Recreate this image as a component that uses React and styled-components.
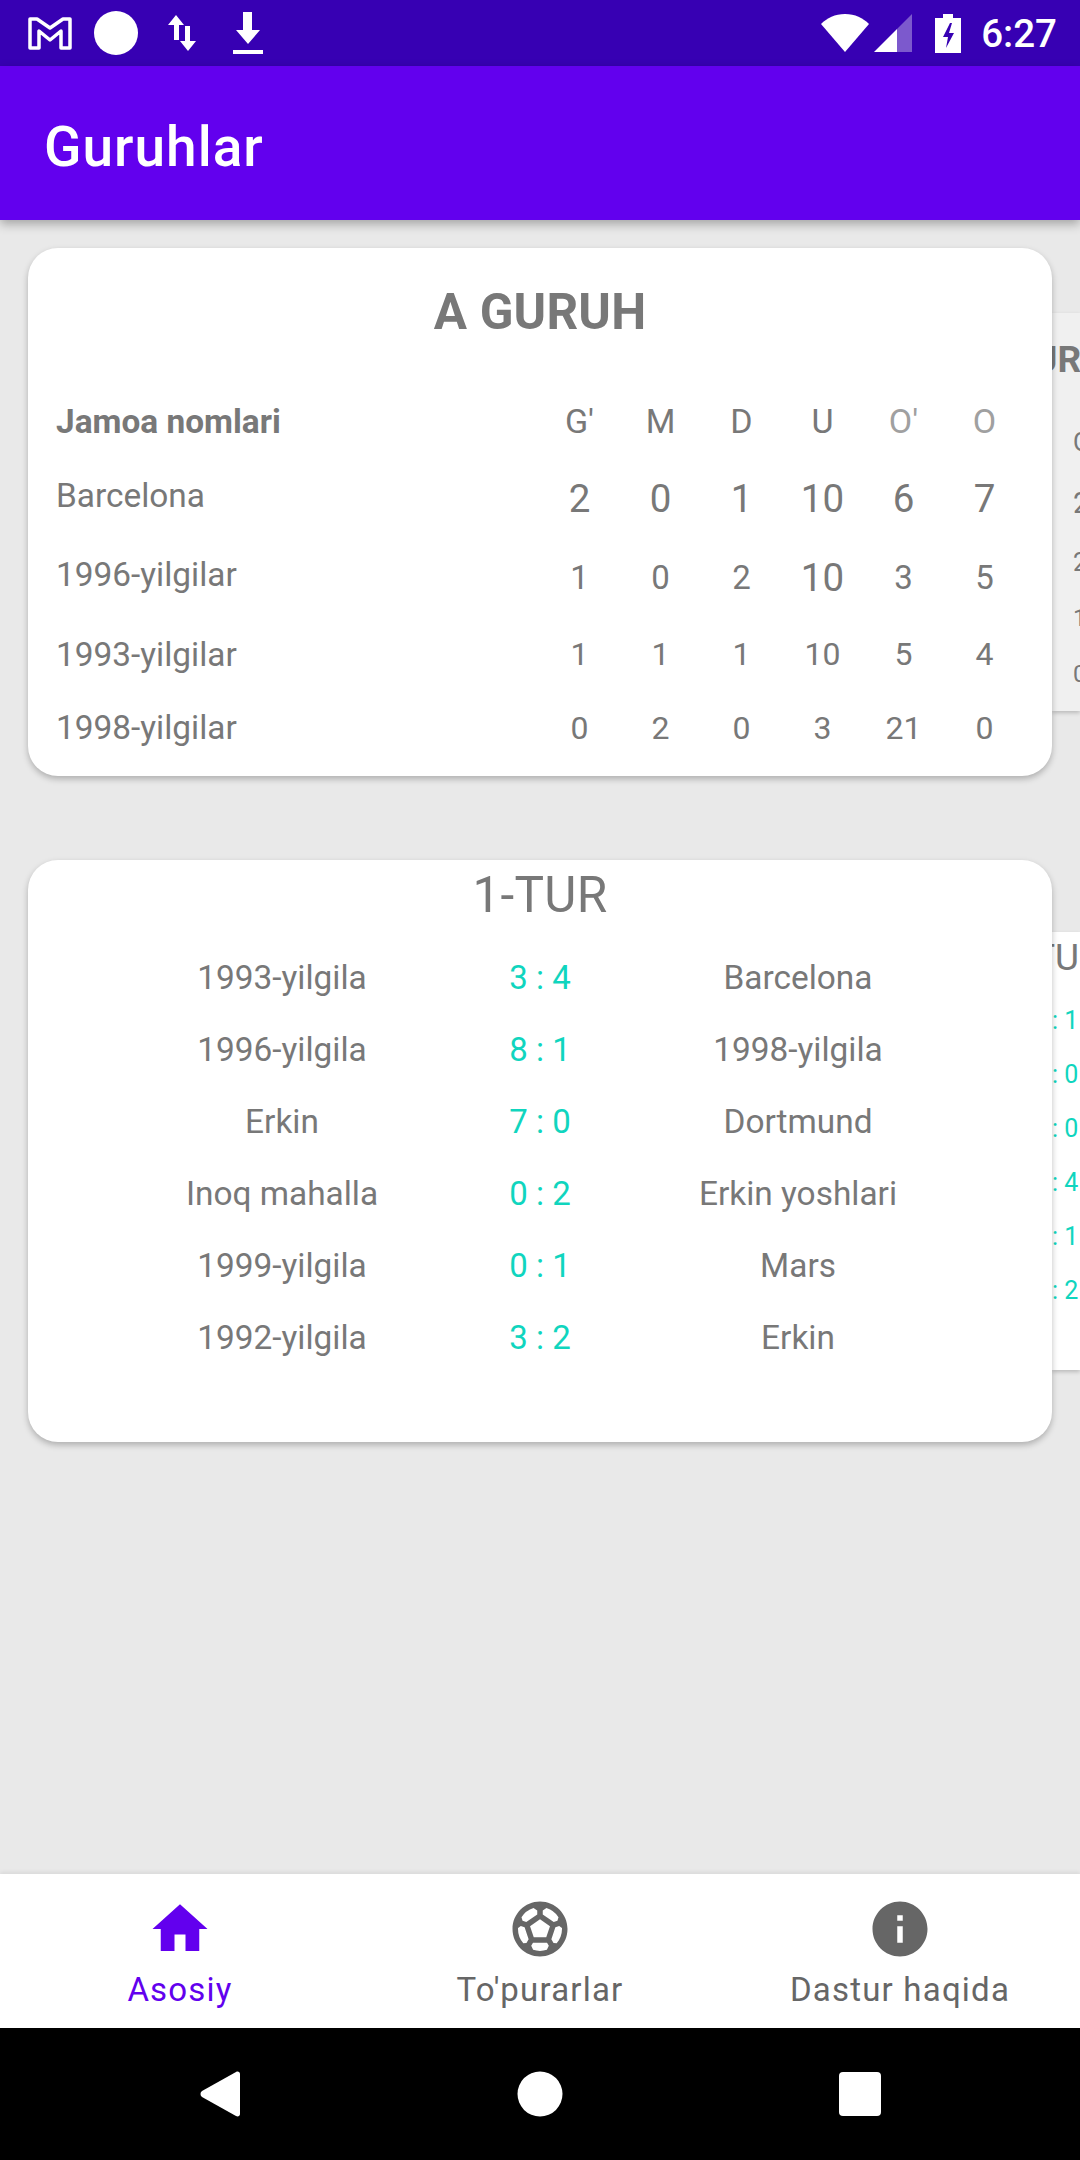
import styled, { createGlobalStyle } from "styled-components";
import { MdHome, MdInfo, MdOutlineSportsSoccer } from "react-icons/md";

const table = [
  { name: "Barcelona", size: 38.5, values: [2, 0, 1, 10, 6, 7] },
  { name: "1996-yilgilar", size: 33, big: 3, values: [1, 0, 2, 10, 3, 5] },
  { name: "1993-yilgilar", size: 32, values: [1, 1, 1, 10, 5, 4] },
  { name: "1998-yilgilar", size: 32, values: [0, 2, 0, 3, 21, 0] },
];

const matches = [
  ["1993-yilgila", "3 : 4", "Barcelona"],
  ["1996-yilgila", "8 : 1", "1998-yilgila"],
  ["Erkin", "7 : 0", "Dortmund"],
  ["Inoq mahalla", "0 : 2", "Erkin yoshlari"],
  ["1999-yilgila", "0 : 1", "Mars"],
  ["1992-yilgila", "3 : 2", "Erkin"],
];

const heads = ["G'", "M", "D", "U", "O'", "O"];
const peekTable = [
  { text: "G", h: 60, size: 25 },
  { text: "2", h: 60, size: 29 },
  { text: "2", h: 60, size: 25 },
  { text: "1", h: 50, size: 24 },
  { text: "0", h: 62, size: 24 },
];
const peekScores = [": 1", ": 0", ": 0", ": 4", ": 1", ": 2"];

export default function App() {
  return (
    <Screen>
      <GlobalStyle />
      <StatusBar>
        <IconSlot>
          <svg width="44" height="34" viewBox="0 0 44 34" fill="none" stroke="#fff" strokeWidth="3.5" strokeLinejoin="round">
            <path d="M2 3h7l13 9 13-9h7v29h-9V15L22 24 11 15v17H2z" />
          </svg>
        </IconSlot>
        <IconSlot>
          <svg width="44" height="44" viewBox="0 0 44 44">
            <circle cx="22" cy="22" r="22" fill="#fff" />
          </svg>
        </IconSlot>
        <IconSlot>
          <svg width="28" height="36" viewBox="0 0 28 36" fill="#fff">
            <path d="M8 0l8 10h-5v15H6V10H0zM20 36l-8-10h5V11h5v15h6z" />
          </svg>
        </IconSlot>
        <IconSlot>
          <svg width="32" height="42" viewBox="0 0 32 42" fill="#fff">
            <path d="M11 0h9v18h8L16 32 4 18h7zM1 38h30v4H1z" />
          </svg>
        </IconSlot>
        <StatusRight>
          <svg width="48" height="38" viewBox="0 0 48 38">
            <path d="M0 10C6 4 14 0 24 0s18 4 24 10L24 38z" fill="#fff" />
          </svg>
          <SignalIcon width="38" height="38" viewBox="0 0 38 38">
            <path d="M38 0v38H23V15z" fill="#fff" fillOpacity="0.35" />
            <path d="M23 15v23H0z" fill="#fff" />
          </SignalIcon>
          <BatteryIcon width="26" height="39" viewBox="0 0 26 39">
            <path d="M8 0h10v4h8v35H0V4h8z" fill="#fff" />
            <path d="M15 9l-7 14h5l-2 11 8-15h-5l3-10z" fill="#3700b3" />
          </BatteryIcon>
          <Clock>6:27</Clock>
        </StatusRight>
      </StatusBar>

      <AppBar>Guruhlar</AppBar>

      <Content>
        <Carousel>
          <Card>
            <GroupTitle>A GURUH</GroupTitle>
            <Table>
              <TableRow>
                <HeadName>Jamoa nomlari</HeadName>
                {heads.map((h, i) => (
                  <HeadCell key={h} $faded={i >= 4}>
                    {h}
                  </HeadCell>
                ))}
              </TableRow>
              {table.map((row) => (
                <TableRow key={row.name}>
                  <TeamName>{row.name}</TeamName>
                  {row.values.map((v, i) => (
                    <Num key={i} $size={i === row.big ? 38.5 : row.size}>
                      {v}
                    </Num>
                  ))}
                </TableRow>
              ))}
            </Table>
          </Card>
          <PeekCard $height={398} $bg="#f0f0f0">
            <PeekGroupTitle>B GURUH</PeekGroupTitle>
            <PeekTable>
              {peekTable.map((line, i) => (
                <PeekLine key={i} $h={line.h} $size={line.size}>
                  {line.text}
                </PeekLine>
              ))}
            </PeekTable>
          </PeekCard>
        </Carousel>

        <Carousel>
          <Card>
            <RoundTitle>1-TUR</RoundTitle>
            <Matches>
              {matches.map(([home, score, away]) => (
                <MatchRow key={home + away}>
                  <Team>{home}</Team>
                  <Score>{score}</Score>
                  <Team>{away}</Team>
                </MatchRow>
              ))}
            </Matches>
          </Card>
          <PeekCard $height={438} $bg="#fff">
            <PeekRoundTitle>2-TUR</PeekRoundTitle>
            <PeekScores>
              {peekScores.map((s, i) => (
                <PeekScore key={i}>{s}</PeekScore>
              ))}
            </PeekScores>
          </PeekCard>
        </Carousel>
      </Content>

      <BottomNav>
        <NavItem $active>
          <MdHome size={66} />
          <span>Asosiy</span>
        </NavItem>
        <NavItem>
          <MdOutlineSportsSoccer size={66} />
          <span>To'purarlar</span>
        </NavItem>
        <NavItem>
          <MdInfo size={66} />
          <span>Dastur haqida</span>
        </NavItem>
      </BottomNav>

      <SystemBar>
        <SystemSlot>
          <svg width="40" height="46" viewBox="0 0 40 46" fill="#fff">
            <path d="M36 1L2 20c-2 1.500-2 4.500 0 6l34 19c2 1 4 0 4-2V3c0-2-2-3-4-2z" />
          </svg>
        </SystemSlot>
        <SystemSlot>
          <svg width="46" height="46" viewBox="0 0 46 46">
            <circle cx="23" cy="23" r="22.500" fill="#fff" />
          </svg>
        </SystemSlot>
        <SystemSlot>
          <svg width="42" height="44" viewBox="0 0 42 44">
            <rect width="42" height="44" rx="4" fill="#fff" />
          </svg>
        </SystemSlot>
      </SystemBar>
    </Screen>
  );
}

const GlobalStyle = createGlobalStyle`
  html, body {
    margin: 0;
    padding: 0;
    background: #e9e9e9;
  }
`;

const Screen = styled.div`
  width: 1080px;
  height: 2160px;
  display: flex;
  flex-direction: column;
  overflow: hidden;
  background: #e9e9e9;
  font-family: Roboto, sans-serif;
  color: #787878;
`;

const StatusBar = styled.div`
  height: 66px;
  flex: none;
  display: flex;
  align-items: center;
  padding: 0 23px 0 17px;
  background: #3700b3;
`;

const IconSlot = styled.div`
  width: 66px;
  display: flex;
  justify-content: center;
  align-items: center;
`;

const StatusRight = styled.div`
  margin-left: auto;
  display: flex;
  align-items: center;
`;

const SignalIcon = styled.svg`
  margin-left: 5px;
`;

const BatteryIcon = styled.svg`
  margin-left: 23px;
`;

const Clock = styled.span`
  margin-left: 20px;
  color: #fff;
  font-size: 38.5px;
  font-weight: 500;
`;

const AppBar = styled.header`
  height: 154px;
  flex: none;
  box-sizing: border-box;
  display: flex;
  align-items: center;
  padding: 8px 0 0 44px;
  background: #6200ee;
  color: #fff;
  font-size: 55px;
  font-weight: 500;
  letter-spacing: 1px;
  box-shadow: 0 4px 10px rgba(0, 0, 0, 0.3);
  z-index: 2;
`;

const Content = styled.main`
  flex: 1;
  display: flex;
  flex-direction: column;
  gap: 84px;
  padding: 28px 0 0 28px;
`;

const Carousel = styled.div`
  display: flex;
  align-items: center;
`;

const Card = styled.section`
  flex: none;
  width: 1024px;
  box-sizing: border-box;
  background: #fff;
  border-radius: 30px;
  box-shadow: 0 3px 6px rgba(0, 0, 0, 0.25);
  position: relative;
  z-index: 1;
`;

const GroupTitle = styled.h2`
  margin: 0;
  padding-top: 35px;
  text-align: center;
  font-size: 49.5px;
  font-weight: 700;
  line-height: 58px;
  letter-spacing: 0.2px;
`;

const Table = styled.div`
  display: flex;
  flex-direction: column;
  gap: 34.5px;
  padding: 60px 27px 28.5px 28px;
`;

const TableRow = styled.div`
  display: grid;
  grid-template-columns: 1fr repeat(6, 81px);
  align-items: center;
`;

const HeadName = styled.div`
  font-size: 33.4px;
  font-weight: 700;
`;

const HeadCell = styled.div`
  text-align: center;
  font-size: 34px;
  color: ${(p) => (p.$faded ? "#a0a0a0" : "#787878")};
`;

const TeamName = styled.div`
  align-self: start;
  font-size: 33.4px;
`;

const Num = styled.div`
  text-align: center;
  font-size: ${(p) => p.$size}px;
`;

const PeekCard = styled.div`
  flex: none;
  width: 28px;
  height: ${(p) => p.$height}px;
  overflow: hidden;
  background: ${(p) => p.$bg};
  box-shadow: 0 2px 4px rgba(0, 0, 0, 0.2);
  white-space: nowrap;
`;

const PeekGroupTitle = styled.div`
  margin: 25px 0 0 -77px;
  font-size: 37px;
  font-weight: 700;
  line-height: 44px;
`;

const PeekTable = styled.div`
  margin: 31px 0 0 21px;
`;

const PeekLine = styled.div`
  height: ${(p) => p.$h}px;
  line-height: ${(p) => p.$h}px;
  font-size: ${(p) => p.$size}px;
`;

const RoundTitle = styled.h2`
  margin: 0;
  padding-top: 6px;
  text-align: center;
  font-size: 49.5px;
  font-weight: 400;
  line-height: 58px;
  letter-spacing: 0.3px;
`;

const Matches = styled.div`
  padding: 18px 0 68px;
`;

const MatchRow = styled.div`
  display: grid;
  grid-template-columns: repeat(3, 258px);
  justify-content: center;
  align-items: center;
  height: 72px;
  text-align: center;
  font-size: 33.4px;
`;

const Team = styled.div``;

const Score = styled.div`
  color: #10d5be;
  font-size: 33px;
`;

const PeekRoundTitle = styled.div`
  margin: 4px 0 0 -50px;
  font-size: 37px;
  line-height: 44px;
`;

const PeekScores = styled.div`
  margin-top: 14px;
`;

const PeekScore = styled.div`
  height: 54px;
  line-height: 54px;
  font-size: 25px;
  color: #10d5be;
`;

const BottomNav = styled.nav`
  height: 154px;
  flex: none;
  display: grid;
  grid-template-columns: repeat(3, 1fr);
  background: #fff;
  box-shadow: 0 -2px 4px rgba(0, 0, 0, 0.07);
`;

const NavItem = styled.div`
  display: flex;
  flex-direction: column;
  align-items: center;
  padding-top: 22px;
  color: ${(p) => (p.$active ? "#6200ee" : "#666")};
  font-size: 33px;
  letter-spacing: 1.2px;
  line-height: 38px;

  span {
    margin-top: 9px;
  }
`;

const SystemBar = styled.div`
  height: 132px;
  flex: none;
  display: flex;
  justify-content: center;
  align-items: center;
  background: #000;
`;

const SystemSlot = styled.div`
  width: 320px;
  display: flex;
  justify-content: center;
  align-items: center;
`;
